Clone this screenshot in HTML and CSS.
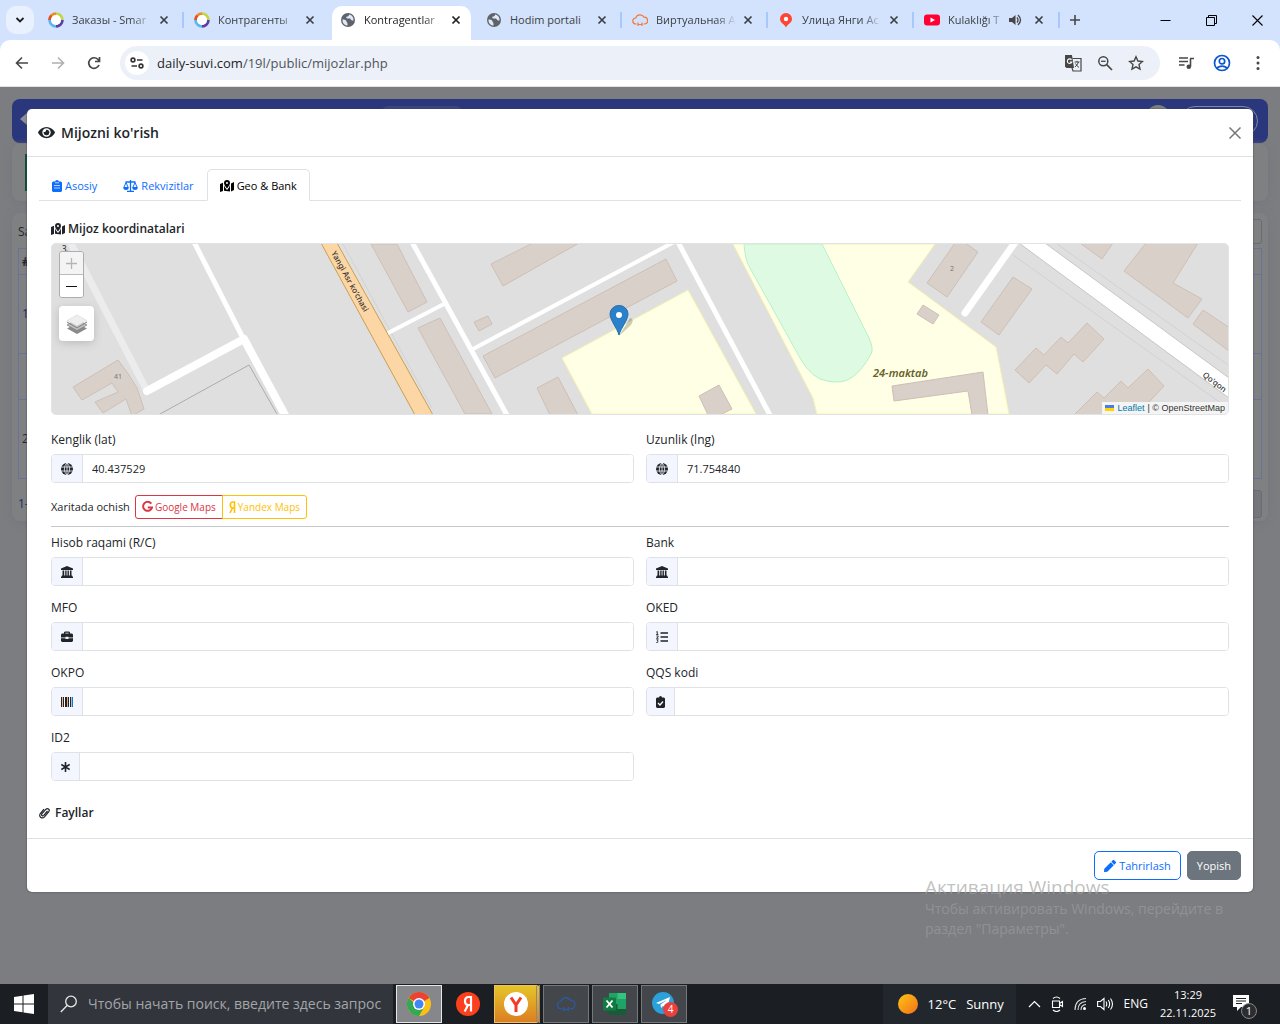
FILE: index.html
```html
<!DOCTYPE html>
<html lang="uz">
<head>
<meta charset="utf-8">
<meta name="viewport" content="width=device-width, initial-scale=1">
<title>Kontragentlar</title>
<link rel="stylesheet" href="styles.css">
</head>
<body>
<svg class="defs" aria-hidden="true">
  <symbol id="i-close" viewBox="0 0 10 10"><path d="M1.5 1.5l7 7M8.500 1.500l-7 7" fill="none" stroke="currentColor" stroke-width="1.7"/></symbol>
  <symbol id="i-ring" viewBox="0 0 16 16"><g fill="none" stroke-width="2.800"><path d="M1.600 8A6.400 6.400 0 0 1 8 1.600" stroke="#f08a24"/><path d="M8 1.600A6.400 6.400 0 0 1 14.400 8" stroke="#c3d545"/><path d="M14.400 8A6.400 6.400 0 0 1 8 14.400" stroke="#5b3fa5"/><path d="M8 14.400A6.400 6.400 0 0 1 1.600 8" stroke="#5cb8ea"/><path d="M3.300 3.600A6.400 6.400 0 0 0 1.600 8" stroke="#d9542c"/></g><circle cx="8" cy="8" r="5" fill="#fff"/></symbol>
  <symbol id="i-world" viewBox="0 0 16 16"><circle cx="8" cy="8" r="7" fill="#5f6368"/><path d="M2.500 7.500c2 0 4 .5 4 2 0 1 1 1 1 2.200v1.800C4.500 13.500 2.200 11 2.500 7.500zM9 2.500c0 1.500-1 2-2 2s-1 1.500 0 2h3c1 .5 1 2 2.200 2h1.300C13.800 5.500 12 3 9 2.500z" fill="#dfe9fb"/></symbol>
  <symbol id="i-cloud" viewBox="0 0 16 16"><path d="M4.500 12H4a3 3 0 0 1-.3-6A4.500 4.500 0 0 1 12 5.200 3.400 3.400 0 0 1 12.500 12h-1M5.500 12.500h5M6 10.500v3.500M10 10.500v3.500" fill="none" stroke="currentColor" stroke-width="1.200"/></symbol>
  <symbol id="i-map" viewBox="0 0 14 12"><path d="M0 4l3-1.200V11L0 12zM11 3.500L14 2v8l-3 1.500zM4 5.200l1 2.300 2 2.500 2-2.500 1-2.500v6.500L4 10.800z" fill="currentColor"/><path fill-rule="evenodd" d="M7 0a3 3 0 0 1 3 3c0 2-3 5.500-3 5.500S4 5 4 3a3 3 0 0 1 3-3zm0 2a1 1 0 1 0 0 2 1 1 0 0 0 0-2z" fill="currentColor"/></symbol>
  <symbol id="i-globe" viewBox="0 0 12 12"><circle cx="6" cy="6" r="6" fill="#212529"/><path d="M0 4h12M0 8h12M6 0v12M6 0C2.500 3 2.500 9 6 12M6 0c3.500 3 3.500 9 0 12" fill="none" stroke="#f3f6ff" stroke-width=".8"/></symbol>
  <symbol id="i-bank" viewBox="0 0 12 12"><path d="M6 0l6 2.500V4H0V2.500zM1.500 4.500h1.700v5H1.500zM4.200 4.500h1.400v5H4.200zM6.500 4.500h1.400v5H6.500zM8.900 4.500h1.600v5H8.900zM.8 9.500h10.400v1H12V12H0v-1.500h.8z" fill="#212529"/></symbol>
  <symbol id="i-case" viewBox="0 0 12 12"><path fill-rule="evenodd" d="M3 2.500V1.200L4 .5h4l1 .7v1.300h2l1 1v3H7.500v-.7h-3v.7H0v-3l1-1zm1.300 0h3.400v-.8H4.300zM0 7.300h4.500V8h3v-.7H12V10l-1 1H1l-1-1z" fill="#212529"/></symbol>
  <symbol id="i-list" viewBox="0 0 12 12"><path d="M4.500 2H12M4.500 6H12M4.500 10H12" stroke="#212529" stroke-width="1.500"/><path d="M.3 1l1-.5V3.500M.2 3.500h2.200M.4 5h1.800v.8L.5 7.300h2M.4 8.800h1.800L1.300 10c1 0 1 1.500 0 1.500H.3" fill="none" stroke="#212529" stroke-width=".9"/></symbol>
  <symbol id="i-bars" viewBox="0 0 12 12"><path d="M0 1h1v10H0zM2 1h1v10H2zM4 1h2v10H4zM7 1h1v10H7zM9 1h1v10H9z" fill="#212529"/><path d="M1 1h.6v10H1zM6 1h.7v10H6z" fill="#e58a2e"/><path d="M10.600 1H12v10h-1.400z" fill="#2276b8"/></symbol>
  <symbol id="i-check" viewBox="0 0 9 12"><path d="M3 1.500a1.500 1.500 0 0 1 3 0h2l1 1V11l-1 1H1l-1-1V2.500l1-1z" fill="#212529"/><path d="M2 7l2 2 3-3.500" fill="none" stroke="#fff" stroke-width="1.300"/></symbol>
  <symbol id="i-star" viewBox="0 0 9 12"><path d="M4.500 1v10M.3 3.500l8.400 5M8.700 3.500l-8.400 5" stroke="#212529" stroke-width="1.600"/></symbol>
</svg>

<header class="browser">
  <nav class="tabstrip" aria-label="Tabs">
    <button class="tab-search" aria-label="Search tabs"><svg width="10" height="8" viewBox="0 0 10 8"><path d="M1.500 2L5 5.500 8.500 2" fill="none" stroke="#1f1f1f" stroke-width="1.800"/></svg></button>
    <div class="tab"><svg class="fav"><use href="#i-ring"/></svg><span>Заказы - Smar</span><svg class="x"><use href="#i-close"/></svg></div>
    <div class="tab plain"><svg class="fav"><use href="#i-ring"/></svg><span>Контрагенты</span><svg class="x"><use href="#i-close"/></svg></div>
    <div class="tab active"><svg class="fav"><use href="#i-world"/></svg><span>Kontragentlar</span><svg class="x"><use href="#i-close"/></svg></div>
    <div class="tab"><svg class="fav"><use href="#i-world"/></svg><span class="full">Hodim portali</span><svg class="x"><use href="#i-close"/></svg></div>
    <div class="tab"><svg class="fav orange"><use href="#i-cloud"/></svg><span>Виртуальная А</span><svg class="x"><use href="#i-close"/></svg></div>
    <div class="tab"><svg class="fav" viewBox="0 0 16 16"><path d="M8 1a6 6 0 0 1 6 6c0 4-4.500 5-6 8.500C6.500 12 2 11 2 7a6 6 0 0 1 6-6z" fill="#f43"/><circle cx="8" cy="7" r="2.200" fill="#fff"/></svg><span>Улица Янги Ас</span><svg class="x"><use href="#i-close"/></svg></div>
    <div class="tab"><svg class="fav" viewBox="0 0 16 16"><rect y="2.500" width="16" height="11" rx="3" fill="#f03"/><path d="M6.500 5.500L11 8l-4.500 2.500z" fill="#fff"/></svg><span class="short">Kulaklığı T</span><svg class="sound" viewBox="0 0 13 12"><path d="M0 4h3l3.500-3v10L3 8H0z" fill="#474747"/><path d="M8 3.500q2 2.500 0 5M9 1q5 5 0 10" fill="none" stroke="#474747" stroke-width="1.300"/></svg><svg class="x"><use href="#i-close"/></svg></div>
    <button class="tab-new" aria-label="New tab"><svg width="12" height="12" viewBox="0 0 12 12"><path d="M6 1v10M1 6h10" stroke="#474747" stroke-width="1.600"/></svg></button>
    <div class="winctl">
      <button aria-label="Minimize"><svg width="11" height="11" viewBox="0 0 11 11"><path d="M.5 5.500h10" stroke="#000"/></svg></button>
      <button aria-label="Restore"><svg width="11" height="11" viewBox="0 0 11 11"><path d="M.5 2.500h8v8h-8zM2.500 2.500v-2h8v8h-2" fill="none" stroke="#000"/></svg></button>
      <button aria-label="Close"><svg width="11" height="11" viewBox="0 0 11 11"><path d="M.5.5l10 10M10.500.5l-10 10" stroke="#000" stroke-width="1.100"/></svg></button>
    </div>
  </nav>
  <div class="toolbar">
    <button aria-label="Back"><svg width="14" height="14" viewBox="0 0 14 14"><path d="M13 7H2M7 1.500L1.500 7 7 12.500" fill="none" stroke="#474747" stroke-width="1.600"/></svg></button>
    <button aria-label="Forward"><svg width="14" height="14" viewBox="0 0 14 14"><path d="M1 7h11M7 1.500L12.500 7 7 12.500" fill="none" stroke="#b0b0b0" stroke-width="1.600"/></svg></button>
    <button aria-label="Reload"><svg width="14" height="14" viewBox="0 0 14 14"><path d="M12 9A5.300 5.300 0 1 1 11 3.500l1 1.200M12.500 1v4.500H8" fill="none" stroke="#474747" stroke-width="1.700"/></svg></button>
    <div class="omnibox">
      <button class="site" aria-label="Site information"><svg width="14" height="12" viewBox="0 0 14 12"><g fill="none" stroke="#333" stroke-width="1.600"><circle cx="3" cy="3" r="1.900"/><path d="M7 3h5.500M1.500 9H7"/><circle cx="11" cy="9" r="1.900"/></g></svg></button>
      <div class="url">daily-suvi.com<span>/19l/public/mijozlar.php</span></div>
      <svg width="18" height="18" viewBox="0 0 18 18"><path d="M1 1h7l2 13H2.500L1 12.500z" fill="#474747"/><path d="M8.500 4.500H17V17H9l-1-3" fill="none" stroke="#474747" stroke-width="1.200"/><path d="M7.500 5.800A2.300 2.300 0 1 0 7.800 8H5.800" fill="none" stroke="#fff" stroke-width="1.100"/><path d="M10.500 8H15.500M13 6.800V8M14.500 8q-1 3-3.500 5M11.500 9.500q1 2 3.500 4" fill="none" stroke="#474747"/></svg>
      <svg width="16" height="16" viewBox="0 0 16 16"><circle cx="6.300" cy="6.300" r="4.500" fill="none" stroke="#474747" stroke-width="1.500"/><path d="M9.700 9.700L15 15" stroke="#474747" stroke-width="1.700"/><path d="M4 6.300h4.600" stroke="#474747" stroke-width="1.300"/></svg>
      <svg width="16" height="16" viewBox="0 0 16 16"><path d="M8 1.800l1.900 4.200 4.600.5-3.500 3.100 1 4.500L8 11.800 4 14.100l1-4.500L1.500 6.500 6.100 6z" fill="none" stroke="#474747" stroke-width="1.400"/></svg>
    </div>
    <div class="tools">
      <button aria-label="Media"><svg width="16" height="14" viewBox="0 0 16 14"><path d="M1 2h9M1 5.500h9M1 9h5.500M12.500 2.500v8M12 2.500h4" fill="none" stroke="#474747" stroke-width="1.600"/><circle cx="10.800" cy="10.800" r="2.300" fill="#474747"/></svg></button>
      <button aria-label="Profile"><svg width="18" height="18" viewBox="0 0 18 18"><g fill="none" stroke="#0b57d0" stroke-width="1.700"><circle cx="9" cy="9" r="7.500"/><circle cx="9" cy="7.200" r="2.700"/><path d="M3.800 14q5.200-3.800 10.400 0"/></g></svg></button>
      <button aria-label="Menu"><svg width="4" height="16" viewBox="0 0 4 16"><g fill="#474747"><circle cx="2" cy="2.500" r="1.500"/><circle cx="2" cy="8" r="1.500"/><circle cx="2" cy="13.500" r="1.500"/></g></svg></button>
    </div>
  </div>
</header>

<main class="page">
  <div class="behind">
    <div class="topbar"><svg width="12" height="12" viewBox="0 0 12 12"><path d="M7 0v4h5v4H7v4L0 6z" fill="#8c8f99"/></svg><i class="chip"></i><i class="avatar"></i><i class="pill"></i></div>
    <div class="panel actions"><i class="add"></i></div>
    <div class="panel listing">
      <div class="listing-head">Sa<i class="filter"></i></div>
      <table class="grid">
        <tr class="head"><th>#</th></tr>
        <tr class="tall"><td class="num">1</td></tr>
        <tr class="mid"><td></td></tr>
        <tr class="tall"><td>2</td></tr>
      </table>
      <div class="listing-foot">1-<i class="pager"></i></div>
    </div>
  </div>

  <section class="modal" role="dialog" aria-labelledby="title">
    <header class="modal-head">
      <svg width="17" height="15" viewBox="0 0 576 512"><path fill="#212529" d="M572.520 241.400C518.290 135.590 410.930 64 288 64S57.680 135.640 3.480 241.410a32.350 32.350 0 0 0 0 29.190C57.710 376.410 165.070 448 288 448s230.320-71.640 284.520-177.410a32.350 32.350 0 0 0 0-29.190zM288 400a144 144 0 1 1 144-144 143.930 143.930 0 0 1-144 144zm0-240a95.310 95.310 0 0 0-25.310 3.790 47.850 47.850 0 0 1-66.900 66.900A95.780 95.780 0 1 0 288 160z"/></svg>
      <h1 id="title">Mijozni ko'rish</h1>
      <button class="dismiss" aria-label="Close"><svg width="14" height="14" viewBox="0 0 14 14"><path d="M1.500 1.500l11 11M12.500 1.500l-11 11" stroke="#777" stroke-width="1.500"/></svg></button>
    </header>
    <div class="modal-body">
      <nav class="tabs">
        <a href="#asosiy"><svg width="10" height="12" viewBox="0 0 10 12"><path d="M3.200 1.500a1.800 1.500 0 0 1 3.600 0H9l1 1V11l-1 1H1l-1-1V2.500l1-1z" fill="currentColor"/><path d="M2 5.500h6M2 8h6M3 2.800h4" stroke="#fff" stroke-width=".7"/></svg>Asosiy</a>
        <a href="#rekvizitlar"><svg width="15" height="12" viewBox="0 0 15 12"><path d="M7.500 0v11M2.500 2h10M4 11.300h7" stroke="currentColor" stroke-width="1.300"/><path d="M3 2.500L.8 7.500h4.400zM12 2.500L9.800 7.500h4.400z" fill="none" stroke="currentColor"/><path d="M0 7.500h6Q5.500 10 3 10T0 7.500zM9 7.500h6q-.5 2.500-3 2.500T9 7.500z" fill="currentColor"/></svg>Rekvizitlar</a>
        <a href="#geo" class="on"><svg width="14" height="12"><use href="#i-map"/></svg>Geo &amp; Bank</a>
      </nav>
      <form class="pane">
        <h2 class="sub"><svg width="14" height="12"><use href="#i-map"/></svg>Mijoz koordinatalari</h2>
        <div class="map">
          <svg class="tiles" viewBox="52 244 1176 170" preserveAspectRatio="xMidYMid slice">
            <rect x="52" y="244" width="1176" height="170" fill="#dfdfdf"/>
            <path d="M64 230L147 391" stroke="#ececec" stroke-width="7"/>
            <path d="M343 244L432 408" stroke="#d2d2d2" fill="none"/>
            <path d="M160 414L249 365L277 414" stroke="#acacac" fill="none"/>
            <path d="M733 244L813 398L817 414H1009L996 347L908 282L935 244z" fill="#ffffe5" stroke="#f5f2b0"/>
            <path d="M562 358L688 290L756 414H592z" fill="#ffffe5" stroke="#f5f2b0"/>
            <path d="M744 244Q745 260 750 268L800 358Q812 379 827 381Q842 384 851 378Q862 371 871 354Q874 349 869 338L822 244z" fill="#defae3" stroke="#b5f2c5"/>
            <g fill="#d9d0c9" stroke="#cdbfb6">
              <path d="M371 244H397L427 302L408 312z"/><path d="M418 328L440 318L492 414H465z"/>
              <path d="M118 360L127 372L137 388L144 409L132 416L126 399L103 413L95 402L118 392L112 383L82 400L73 387z"/>
              <path d="M491 264L533 243H579L503 286z"/><path d="M483 356L666 259L677 281L495 378z"/>
              <path d="M474 322L488 316L492 324L479 331z"/><path d="M537 388L558 377L578 415H550z"/>
              <path d="M699 396L719 385L732 409L720 415H708z"/><path d="M955 243H965L978 252L947 297L927 283z"/>
              <path d="M1013 277L1032 289L999 335L981 322z"/><path d="M923 305L939 315L933 324L917 314z"/>
              <path d="M1080 243H1113L1102 259z"/><path d="M1146 243H1198L1173 283L1202 299L1188 318L1124 271z"/>
              <path d="M1203 310L1230 328V352L1193 324z"/>
              <path d="M1015 370L1036 348L1044 355L1061 337L1068 343L1087 323L1104 339L1083 362L1074 354L1057 374L1046 365L1029 383z"/>
              <path d="M1074 415L1097 392L1104 398L1121 381L1128 388L1148 369L1164 386L1136 416z"/>
              <path d="M892 386L983 372L988 415H972L968 391L894 401z"/>
            </g>
            <g fill="none" stroke="#fff" stroke-linecap="round">
              <path d="M194 242L243 338" stroke-width="5"/><path d="M147 391L244 339L286 417" stroke-width="8" stroke-linejoin="round"/>
              <path d="M388 333L446 303" stroke-width="4"/><path d="M412 242L445 302L508 417" stroke-width="5"/>
              <path d="M473 349L674 242" stroke-width="4"/><path d="M678 242L771 417" stroke-width="5"/>
              <path d="M965 313L1016 241" stroke-width="7"/>
            </g>
            <path d="M1013 255L1228 408M1057 244L1228 365" stroke="#d2d2d2"/>
            <path d="M1019 243L1229 398V378L1045 243z" fill="#fff" stroke="#c6c6c6"/>
            <path d="M321 243L415 415H433L337 243z" fill="#fcd6a4" stroke="#c9a050"/>
            <g class="map-text">
              <text class="place" x="873" y="377">24-maktab</text>
              <text class="street" transform="translate(331 253) rotate(61)">Yangi Asr ko'chasi</text>
              <text class="street" transform="translate(1202 376) rotate(37)">Qo'qon</text>
              <text class="house" x="114" y="379">41</text><text class="house" x="950" y="271">2</text><text class="street" x="62" y="252">3.</text>
            </g>
            <path d="M619 336L631 325Q635 319 630 318z" fill="#000" opacity=".2"/>
            <path d="M619 335C617 328 610 320 610 314A9 8.500 0 0 1 628 314C628 320 621 328 619 335z" fill="#2a81cb" stroke="#256ead"/><circle cx="619" cy="315" r="3" fill="#fff"/>
          </svg>
          <div class="map-ctl">
            <div class="zoom"><button type="button" class="off" aria-label="Zoom in"><svg width="11" height="11" viewBox="0 0 11 11"><path d="M5.500 0v11M0 5.500h11" stroke="#b5b5b5" stroke-width="1.300"/></svg></button><button type="button" aria-label="Zoom out"><svg width="11" height="11" viewBox="0 0 11 11"><path d="M0 5.500h11" stroke="#111" stroke-width="1.200"/></svg></button></div>
            <button type="button" class="layers" aria-label="Layers"><svg width="20" height="20" viewBox="0 0 20 20"><path d="M0 14.500L10 9l10 5.500L10 20z" fill="#8a8a8a"/><path d="M0 11L10 5.500 20 11l-10 5.500z" fill="#c2c2c2" stroke="#858585" stroke-width=".8"/><path d="M0 6.500L10 .8l10 5.700L10 12z" fill="#eee" stroke="#ccc" stroke-width=".4"/><path d="M0 7.500l10 5.700 10-5.700v1.300l-10 5.700L0 8.800z" fill="#8b8b8b"/></svg></button>
          </div>
          <div class="credit"><svg width="9" height="6" viewBox="0 0 9 6"><path fill="#4c7be1" d="M0 0h9v3H0z"/><path fill="#ffd500" d="M0 3h9v3H0z"/></svg><a href="#leaflet">Leaflet</a> | © OpenStreetMap</div>
        </div>

        <div class="fields geo">
          <div class="field"><label for="lat">Kenglik (lat)</label><div class="group"><span><svg><use href="#i-globe"/></svg></span><input id="lat" value="40.437529"></div></div>
          <div class="field"><label for="lng">Uzunlik (lng)</label><div class="group"><span><svg><use href="#i-globe"/></svg></span><input id="lng" value="71.754840"></div></div>
        </div>
        <div class="open-in"><span>Xaritada ochish</span>
          <div class="pair">
            <button type="button" class="google"><svg width="11" height="12" viewBox="0 0 11 12"><path d="M9.300 2.700A4.500 4.500 0 1 0 10 6.500H5.800" fill="none" stroke="currentColor" stroke-width="2"/></svg>Google Maps</button>
            <button type="button" class="yandex"><svg width="7" height="12" viewBox="0 0 7 12"><path d="M5.500 12V1H4Q1.300 1 1.300 4T4 7h1.500M3.500 7L1 12" fill="none" stroke="currentColor" stroke-width="1.600"/></svg>Yandex Maps</button>
          </div>
        </div>
        <hr>
        <div class="fields">
          <div class="field"><label for="acc">Hisob raqami (R/C)</label><div class="group"><span><svg><use href="#i-bank"/></svg></span><input id="acc"></div></div>
          <div class="field"><label for="bank">Bank</label><div class="group"><span><svg><use href="#i-bank"/></svg></span><input id="bank"></div></div>
          <div class="field"><label for="mfo">MFO</label><div class="group"><span><svg><use href="#i-case"/></svg></span><input id="mfo"></div></div>
          <div class="field"><label for="oked">OKED</label><div class="group"><span><svg><use href="#i-list"/></svg></span><input id="oked"></div></div>
          <div class="field"><label for="okpo">OKPO</label><div class="group"><span><svg><use href="#i-bars"/></svg></span><input id="okpo"></div></div>
          <div class="field"><label for="qqs">QQS kodi</label><div class="group"><span><svg class="slim"><use href="#i-check"/></svg></span><input id="qqs"></div></div>
          <div class="field"><label for="id2">ID2</label><div class="group"><span><svg class="slim"><use href="#i-star"/></svg></span><input id="id2"></div></div>
        </div>
      </form>
      <h2 class="files"><svg width="11" height="12" viewBox="0 0 11 12"><path d="M8.500 4L4.800 8.300q-1 1-1.800.2t0-1.800L6.800 2.300q1.300-1.400 2.700-.3t.3 2.700L5.500 9.800q-1.800 2-3.700.6T1.300 6.500L5 2.200" fill="none" stroke="#212529" stroke-width="1.200"/></svg>Fayllar</h2>
    </div>
    <footer class="modal-foot">
      <button class="edit"><svg width="12" height="12" viewBox="0 0 512 512"><path fill="currentColor" d="M290.740 93.240l128.020 128.020-277.990 277.990-114.140 12.600C11.350 513.540-1.560 500.620.14 485.340l12.700-114.220 277.900-277.880zm207.200-19.060l-60.110-60.110c-18.750-18.750-49.160-18.750-67.910 0l-56.550 56.550 128.020 128.020 56.550-56.550c18.750-18.760 18.750-49.160 0-67.910z"/></svg>Tahrirlash</button>
      <button class="shut">Yopish</button>
    </footer>
  </section>
  <aside class="watermark"><strong>Активация Windows</strong><p>Чтобы активировать Windows, перейдите в раздел "Параметры".</p></aside>
</main>

<footer class="taskbar">
  <button class="start" aria-label="Start"><svg width="20" height="20" viewBox="0 0 20 20"><path d="M0 3l8.500-1.200v7.700H0zM9.500 1.600L20 0v9.500H9.500zM0 10.500h8.500v7.700L0 17zM9.500 10.500H20V20L9.500 18.400z" fill="#fff"/></svg></button>
  <label class="search"><svg width="18" height="18" viewBox="0 0 18 18"><circle cx="11" cy="6.500" r="5.300" fill="none" stroke="#e8e8e8" stroke-width="1.300"/><path d="M7.300 10.300L.8 17" stroke="#e8e8e8" stroke-width="1.300"/></svg><input placeholder="Чтобы начать поиск, введите здесь запрос" aria-label="Поиск"></label>
  <div class="apps">
    <button class="app current" aria-label="Chrome"><svg viewBox="0 0 24 24"><circle cx="12" cy="12" r="12" fill="#fbc116"/><path d="M12 12L1.600 6A12 12 0 0 1 22.400 6z" fill="#ea4335"/><path d="M1.600 6A12 12 0 0 0 12 24l5.200-9H12z" fill="#34a853"/><circle cx="12" cy="12" r="6" fill="#fff"/><circle cx="12" cy="12" r="4.500" fill="#4285f4"/></svg></button>
    <button class="app bare" aria-label="Yandex"><svg viewBox="0 0 24 24"><circle cx="12" cy="12" r="12" fill="#fc3f1d"/><path d="M15 19.500V5h-2.200Q9 5 9 9.200 9 13 12.800 13H15M12 13l-3.300 6.500" fill="none" stroke="#fff" stroke-width="2.200"/></svg></button>
    <button class="app ybr" aria-label="Yandex Browser"><svg viewBox="0 0 24 24"><circle cx="12" cy="12" r="12" fill="#fff"/><path d="M12 20v-7L7 5.500M12 13l5-7.500" fill="none" stroke="#f23b26" stroke-width="3"/></svg></button>
    <button class="app" aria-label="Cloud"><svg class="blue" viewBox="-2 -2 20 20"><use href="#i-cloud" width="16" height="16"/></svg></button>
    <button class="app" aria-label="Excel"><svg viewBox="0 0 24 24"><path d="M6 1h17v22H6z" fill="#21a366"/><path d="M14.500 1H23v6h-8.500z" fill="#33c481"/><path d="M6 12h8.500v11H6zM14.500 17H23v6h-8.500z" fill="#185c37"/><rect y="5.500" width="13" height="13" rx="1" fill="#107c41"/><path d="M3.500 8.500l6 7M9.500 8.500l-6 7" stroke="#fff" stroke-width="1.900"/></svg></button>
    <button class="app" aria-label="Telegram"><svg viewBox="0 0 24 24"><circle cx="11" cy="11" r="11" fill="#2ba0da"/><path d="M4 11l14-6-3 12-4-3-2 2-.5-3.500L15 8l-8 4z" fill="#fff"/></svg><b>4</b></button>
  </div>
  <div class="weather"><svg width="20" height="20" viewBox="0 0 20 20"><defs><linearGradient id="sun" x1="0" y1="0" x2="1" y2="1"><stop stop-color="#ffc414"/><stop offset="1" stop-color="#f2701a"/></linearGradient></defs><circle cx="10" cy="10" r="10" fill="url(#sun)"/></svg><span>12°C</span><span>Sunny</span></div>
  <div class="tray">
    <svg width="13" height="8" viewBox="0 0 13 8"><path d="M1 7l5.500-5.500L12 7" fill="none" stroke="#fff" stroke-width="1.200"/></svg>
    <svg width="13" height="16" viewBox="0 0 13 16"><path d="M1.500 5h7v6.500h-7zM8.500 7.500l3-2v5l-3-2M2 2.500Q5.500-.5 9 2.500M2 14q3.500 3 7 0" fill="none" stroke="#fff" stroke-width="1.100"/></svg>
    <svg width="13" height="14" viewBox="0 0 13 14"><path d="M1 13Q1 2 12 1.500M4 13q0-8 8-8.500M7 13q0-5 5-5.500" fill="none" stroke="#ddd" stroke-width="1.100"/><circle cx="10.500" cy="11.500" r="1.500" fill="#fff"/></svg>
    <svg width="17" height="14" viewBox="0 0 17 14"><path d="M.6 4.500h2.800L7 1.500v11L3.400 9.500H.6zM9 4.500q1.500 2.500 0 5M11.300 3q2.700 4 0 8M13.500 1.500q4 5.500 0 11" fill="none" stroke="#fff" stroke-width="1.100"/></svg>
    <span>ENG</span>
  </div>
  <div class="clock"><span>13:29</span><span>22.11.2025</span></div>
  <div class="notice"><svg width="16" height="16" viewBox="0 0 16 16"><path d="M0 0h16v12H8l-4 4v-4H0z" fill="#fff"/><path d="M3 3.500h10M3 6h10M3 8.500h6" stroke="#1c1e22"/></svg><b>1</b></div>
</footer>
</body>
</html>
```
FILE: styles.css
```css
* { box-sizing: border-box; }
body { margin: 0; min-height: 100vh; display: flex; flex-direction: column; font: 12px/18px "Open Sans", "Noto Sans", sans-serif; color: #212529; background: #7c7d81; }
button, input { font: inherit; color: inherit; }
button { border: 0; padding: 0; background: none; display: flex; align-items: center; justify-content: center; }
svg { display: block; flex: none; }
h1, h2, p { margin: 0; }
.defs { position: absolute; width: 0; height: 0; }

/* browser chrome */
.browser { background: #d3e3fd; }
.tabstrip { height: 40px; display: flex; align-items: center; padding-left: 6px; }
.tab-search { width: 28px; height: 28px; border-radius: 10px; background: #e9f1fe; margin-right: 6px; }
.tab { width: 146px; height: 40px; display: flex; align-items: center; padding: 0 10px 0 8px; color: #3c4043; font-size: 11px; line-height: 20px; position: relative; }
.tab .fav { width: 16px; height: 16px; margin-right: 8px; }
.tab span { width: 80px; white-space: nowrap; -webkit-mask-image: linear-gradient(90deg, #000 60px, transparent 80px); mask-image: linear-gradient(90deg, #000 60px, transparent 80px); }
.tab .full { -webkit-mask-image: none; mask-image: none; }
.tab .short { width: 56px; margin-right: 5px; -webkit-mask-image: linear-gradient(90deg, #000 40px, transparent 58px); mask-image: linear-gradient(90deg, #000 40px, transparent 58px); }
.tab .sound { width: 13px; height: 12px; }
.tab .x { width: 10px; height: 10px; margin-left: 7px; }
.tab .sound + .x { margin-left: 12px; }
.tab:not(.active):not(.plain)::after { content: ""; position: absolute; right: 2px; top: 12px; width: 2px; height: 16px; background: #a8c7fa; }
.tab:has(.full)::after { right: 10px; }
.tab.active { color: #1f1f1f; }
.tab.active::before { content: ""; position: absolute; inset: 6px 7px 0 0; background: #fff; border-radius: 10px 10px 0 0; }
.tab.active > * { position: relative; }
.orange { color: #ee7a3c; }
.tab-new { width: 26px; height: 28px; }
.winctl { margin-left: auto; display: flex; }
.winctl button { width: 46px; height: 40px; }
.toolbar { height: 47px; display: flex; align-items: center; background: #fff; border-radius: 10px 10px 0 0; border-bottom: 1px solid #dfe1e5; padding-left: 4px; }
.toolbar > button { width: 36px; height: 36px; }
.omnibox { flex: 1; height: 34px; margin-left: 8px; border-radius: 17px; background: #ecf0f9; display: flex; align-items: center; gap: 15px; padding: 0 16px 0 5px; }
.site { width: 24px; height: 24px; border-radius: 12px; background: #fff; margin-right: -7px; }
.url { flex: 1; font-size: 13px; line-height: 20px; color: #1f1f1f; }
.url span { color: #50545a; }
.tools { display: flex; align-items: center; width: 120px; padding-left: 8px; }
.tools button { width: 36px; height: 36px; }

/* dimmed page under the dialog */
.page { flex: 1; position: relative; overflow: hidden; }
.behind { position: absolute; inset: 12px 12px auto; display: flex; flex-direction: column; color: #24262a; }
.topbar { height: 44px; border-radius: 8px; background: #2b377c; display: flex; align-items: center; padding: 0 10px; margin-bottom: 1px; }
.topbar svg { margin: -4px 0 0 -2px; }
.chip { width: 80px; height: 30px; border-radius: 6px; background: #3b4680; margin-left: 350px; }
.avatar { width: 24px; height: 32px; border-radius: 12px; background: #7f7f80; margin-left: auto; }
.pill { width: 78px; height: 30px; border: 1px solid #8087a8; border-radius: 15px; margin-left: 10px; }
.panel { background: #7f8082; border-radius: 8px; box-shadow: 0 2px 8px #75767c; }
.actions { height: 57px; margin-bottom: 12px; padding: 10px 13px; }
.add { display: block; width: 60px; height: 37px; background: #0d4d35; }
.listing { height: 308px; padding: 6px; }
.listing-head, .listing-foot { display: flex; justify-content: space-between; align-items: center; height: 25px; }
.filter, .pager { width: 60px; height: 25px; border: 1px solid #696c74; border-radius: 3px; }
.pager { background: #74767b; height: 28px; }
.listing-foot { margin-top: 12px; color: #1c2b66; }
.grid { width: 100%; margin-top: 4px; border-collapse: collapse; text-align: left; }
.grid td, .grid th { border: 1px solid #69729a; padding: 0 3px; }
.head { height: 26px; }
.tall { height: 79px; }
.mid { height: 46px; }
.num { color: #1c2b66; }

/* dialog */
.modal { position: relative; margin: 22px 27px; background: #fff; border-radius: 5px; box-shadow: 0 0 2px #444; }
.modal-head { display: flex; align-items: center; gap: 6px; height: 48px; padding: 0 11px; border-bottom: 1px solid #dee2e6; }
.modal-head h1 { font-size: 14px; line-height: 20px; font-weight: 600; }
.dismiss { margin-left: auto; width: 14px; height: 14px; }
.modal-body { padding: 12px 12px 16px; }
.tabs { display: flex; border-bottom: 1px solid #dee2e6; height: 32px; font-size: 11px; }
.tabs a { display: flex; align-items: center; gap: 3px; padding: 2px 12px 0; color: #0d6efd; text-decoration: none; border: 1px solid transparent; }
.tabs .on { color: #000; background: #fff; border-color: #dee2e6 #dee2e6 #fff; border-radius: 5px 5px 0 0; margin-bottom: -1px; }
.pane { padding: 0 12px; }
.sub, .files { display: flex; align-items: center; gap: 3px; font-size: 12px; line-height: 18px; font-weight: 600; }
.sub { padding: 19px 0 5px; }
.map { position: relative; height: 172px; border: 1px solid #e2e3e5; border-radius: 5px; overflow: hidden; background: #dfdfdf; }
.tiles { width: 100%; height: 100%; }
.map-text { font-family: "Noto Sans", sans-serif; }
.place { font-size: 11px; font-weight: 600; font-style: italic; fill: #666129; }
.street { font-size: 8px; font-weight: 500; fill: #333; }
.house { font-size: 7px; fill: #777; }
.map-ctl { position: absolute; left: 7px; top: 7px; display: flex; flex-direction: column; gap: 8px; }
.zoom { width: 25px; border: 1px solid #adadad; border-radius: 3px; overflow: hidden; }
.zoom button { width: 23px; height: 22px; background: #fff; }
.zoom .off { height: 23px; background: #f4f4f4; border-bottom: 1px solid #bbb; }
.layers { width: 35px; height: 35px; background: #fff; border-radius: 4px; box-shadow: 0 2px 8px #bbb; }
.credit { position: absolute; right: 0; bottom: 0; height: 12px; padding: 0 3px; display: flex; align-items: center; gap: 3px; background: #f4f4f4; font: 9px/12px "Liberation Sans", sans-serif; color: #333; white-space: nowrap; }
.credit a { color: #0078a8; text-decoration: none; }
.fields { display: grid; grid-template-columns: 1fr 1fr; gap: 13px 12px; padding-bottom: 23px; }
.geo { padding: 16px 0 12px; }
.field { display: flex; flex-direction: column; gap: 5px; }
.group { display: flex; height: 29px; border: 1px solid #dee2e6; border-radius: 4px; overflow: hidden; }
.group span { display: flex; align-items: center; padding: 0 9px; background: #f3f6ff; border-right: 1px solid #dee2e6; }
.group svg { width: 12px; height: 12px; }
.group .slim { width: 9px; }
.group input { flex: 1; min-width: 0; border: 0; padding: 0 9px; background: #fff; outline: 0; font-size: 11px; }
.open-in { display: flex; align-items: center; gap: 5px; height: 24px; font-size: 11px; }
.pair { display: flex; }
.pair button { height: 24px; padding: 0 6px; gap: 2px; border: 1px solid; font-size: 10px; }
.google { color: #dc3545; border-radius: 3px 0 0 3px; }
.yandex { color: #ffc107; border-radius: 0 3px 3px 0; margin-left: -1px; }
hr { margin: 7px 0; border: 0; border-top: 1px solid #c7c8ca; }
.files { gap: 5px; }
.modal-foot { display: flex; justify-content: flex-end; gap: 6px; padding: 12px; border-top: 1px solid #dee2e6; }
.modal-foot button { height: 29px; padding: 0 9px; border: 1px solid; border-radius: 5px; gap: 3px; font-size: 11px; }
.edit { color: #0d6efd; }
.modal-foot .shut { background: #6c757d; color: #fff; border-color: #6c757d; }
.watermark { position: absolute; right: 42px; bottom: 45px; width: 313px; color: rgba(158, 158, 158, .65); font-size: 14px; line-height: 20px; pointer-events: none; }
.watermark strong { font-size: 19px; line-height: 24px; font-weight: 400; }

/* taskbar */
.taskbar { height: 40px; display: flex; background: #1b1e22; color: #fff; font-size: 14px; }
.start { width: 48px; height: 40px; }
.search { width: 345px; display: flex; align-items: center; gap: 10px; padding-left: 12px; background: #32363c; }
.search input { flex: 1; min-width: 0; border: 0; padding: 0; background: none; outline: 0; }
.search input::placeholder { color: #a3a5a8; opacity: 1; }
.apps { display: flex; gap: 3px; padding: 1px 3px 1px; }
.app { position: relative; width: 46px; height: 38px; background: #43464a; border: 1px solid #75777a; }
.app svg { width: 24px; height: 24px; }
.current { background: #85878a; border-color: #e6e6e6; }
.bare { background: none; border-color: transparent; }
.ybr { background: linear-gradient(#e6c42a, #db7f22); border-color: #f0c060; border-right: 4px double #888; }
.blue { color: #2a5b9e; }
.app b { position: absolute; right: 8px; bottom: 5px; width: 15px; height: 15px; border-radius: 8px; background: #e8413d; font-size: 10px; line-height: 15px; font-weight: 400; }
.weather { margin-left: auto; width: 133px; background: #22272d; display: flex; align-items: center; gap: 10px; padding-left: 15px; font-size: 13px; }
.tray { display: flex; align-items: center; gap: 10px; padding-left: 12px; font-size: 12px; }
.clock { width: 80px; display: flex; flex-direction: column; align-items: center; justify-content: center; font-size: 11px; line-height: 18px; }
.notice { position: relative; width: 52px; padding: 11px 0 0 5px; }
.notice b { position: absolute; left: 13px; top: 19px; width: 16px; height: 16px; border: 1px solid #888; border-radius: 8px; background: #2b2d31; font-size: 11px; line-height: 14px; font-weight: 400; text-align: center; }
```
